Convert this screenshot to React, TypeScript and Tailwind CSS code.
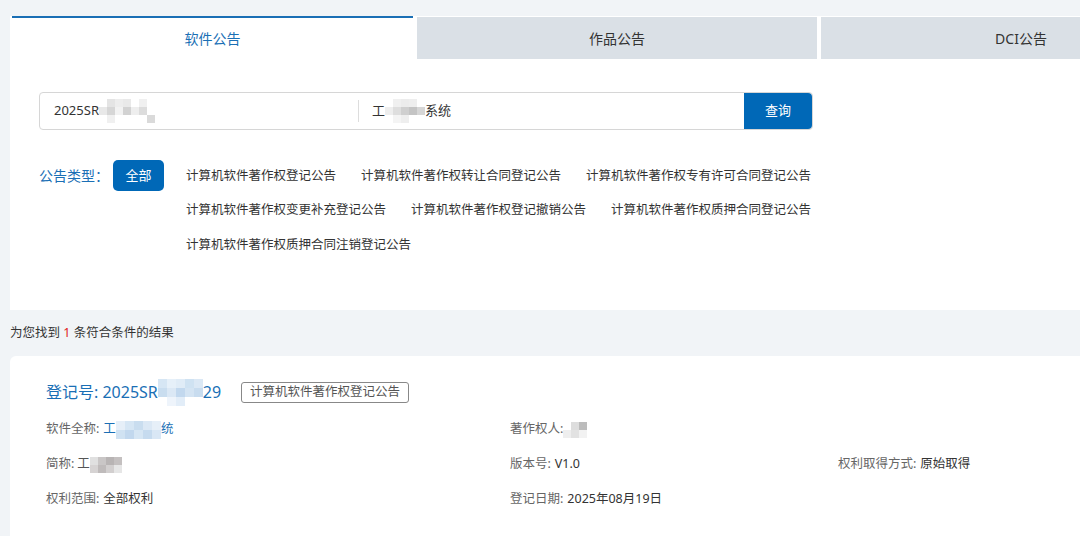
import React from 'react'

// pixelated blocks standing in for the masked text in the screenshot
function Mosaic({ rows, size = 8 }: { rows: string[][]; size?: number }) {
  return (
    <span className="inline-flex flex-col align-middle blur-[0.6px]">
      {rows.map((row, i) => (
        <span key={i} className="flex">
          {row.map((c, j) => (
            <span key={j} style={{ width: size, height: size, background: c }} />
          ))}
        </span>
      ))}
    </span>
  )
}

const types = [
  '计算机软件著作权登记公告',
  '计算机软件著作权转让合同登记公告',
  '计算机软件著作权专有许可合同登记公告',
  '计算机软件著作权变更补充登记公告',
  '计算机软件著作权登记撤销公告',
  '计算机软件著作权质押合同登记公告',
  '计算机软件著作权质押合同注销登记公告',
]

const w = '#ffffff'

export default function App() {
  return (
    <div className="min-h-[536px] w-full overflow-hidden bg-[#f1f4f7] pt-[16px] pl-[10px] font-['Noto_Sans','Noto_Sans_CJK_SC',sans-serif] text-[#333]">
      {/* search panel */}
      <div className="h-[294px] w-[1240px] bg-white">
        <div className="flex h-[43px] gap-[4px] pl-[2px]">
          <div className="flex w-[401px] items-center justify-center border-t-2 border-[#1a6fb5] text-[14px] text-[#1a6fb5]">
            软件公告
          </div>
          <div className="mt-[1px] flex w-[400px] items-center justify-center bg-[#dae0e6] text-[14px] text-[#333]">
            作品公告
          </div>
          <div className="mt-[1px] flex w-[400px] items-center justify-center bg-[#dae0e6] text-[14px] text-[#333]">
            DCI公告
          </div>
        </div>

        <div className="ml-[29px] mt-[33px] flex h-[38px] w-[774px] rounded-[4px] border border-[#d6d6d6]">
          <div className="flex w-[318px] items-center pl-[14px] text-[13px] text-[#333]">
            2025SR
            <Mosaic
              size={8}
              rows={[
                [w, '#e4e4e4', '#ededed', '#e9e9e9', w, '#f0f0f0', w, w],
                ['#e8e8e8', '#d6d6d6', '#f2f2f2', '#d2d2d2', '#eeeeee', '#dcdcdc', w, w],
                [w, '#f0f0f0', w, w, w, w, '#dadada', w],
              ]}
            />
          </div>
          <div className="my-auto h-[22px] w-px bg-[#ddd]" />
          <div className="flex flex-1 items-center pl-[13px] text-[13px] text-[#333]">
            工
            <Mosaic
              size={8}
              rows={[
                [w, '#f0f0f0', '#ececec', '#eeeeee', w],
                ['#eeeeee', '#dedede', '#cfcfcf', '#c4c4c4', '#d6d6d6'],
                [w, '#f4f4f4', '#eeeeee', w, w],
              ]}
            />
            系统
          </div>
          <button className="w-[68px] rounded-r-[4px] bg-[#0068b7] text-[13px] text-white">查询</button>
        </div>

        <div className="ml-[29px] mt-[30px] flex items-start">
          <div className="flex h-[31px] w-[74px] items-center text-[14px] text-[#1a6fb5]">公告类型：</div>
          <button className="h-[31px] w-[51px] rounded-[5px] bg-[#0068b7] text-[13px] text-white">全部</button>
          <div className="-mt-[1.5px] ml-[22px] flex w-[640px] flex-wrap gap-x-[25px]">
            {types.map((t) => (
              <span key={t} className="h-[34.5px] text-[12.5px] leading-[34.5px] text-[#333]">
                {t}
              </span>
            ))}
          </div>
        </div>
      </div>

      <div className="mt-[14px] text-[12.5px] leading-[18px] text-[#333]">
        为您找到 <span className="text-[#e02020]">1</span> 条符合条件的结果
      </div>

      {/* result card */}
      <div className="mt-[14px] h-[220px] w-[1240px] rounded-[6px] bg-white pl-[36px] pt-[24px]">
        <div className="flex h-[24px] items-center gap-[20px]">
          <div className="flex items-center text-[16px] text-[#1a6fb5]">
            登记号: 2025SR
            <Mosaic
              size={9}
              rows={[
                ['#d6e6f4', '#e6f0f9', '#e0ecf7', '#cfe2f2', '#dbe8f5'],
                ['#c9ddef', '#dbe8f5', '#c2d8ee', '#d4e4f3', '#c8dcef'],
                [w, '#eef4fb', '#e2edf8', w, w],
              ]}
            />
            29
          </div>
          <span className="flex h-[21px] items-center rounded-[3px] border border-[#888] px-[8px] text-[12.5px] text-[#555]">
            计算机软件著作权登记公告
          </span>
        </div>

        <div className="mt-[8px] grid grid-cols-[464px_328px_1fr] text-[12.5px]">
          <div className="flex h-[35px] items-center">
            <span className="text-[#666]">软件全称: </span>
            <span className="ml-[4px] flex items-center text-[#1a6fb5]">
              工
              <Mosaic
                size={9}
                rows={[
                  ['#e6eff8', '#d6e6f4', '#c9ddef', '#dbe8f5', '#e6eff8'],
                  ['#d0e2f2', '#c2d8ee', '#d6e6f4', '#c6dbef', '#d9e7f5'],
                ]}
              />
              统
            </span>
          </div>
          <div className="flex h-[35px] items-center">
            <span className="text-[#666]">著作权人:</span>
            <Mosaic
              size={8}
              rows={[
                [w, '#dddddd', '#bcbcbc', w],
                ['#eeeeee', '#e2e2e2', '#f2f2f2', w],
              ]}
            />
          </div>
          <div className="h-[35px]" />

          <div className="flex h-[35px] items-center">
            <span className="text-[#666]">简称: </span>
            <span className="ml-[3px] text-[#555]">工</span>
            <Mosaic
              size={8}
              rows={[
                ['#e0e0e0', '#c9c6c6', '#b8b4b4', '#c4c0c0'],
                ['#d6d3d3', '#bfbbbb', '#d2cfcf', '#e6e6e6'],
              ]}
            />
          </div>
          <div className="flex h-[35px] items-center">
            <span className="text-[#666]">版本号: </span>
            <span className="ml-[4px]">V1.0</span>
          </div>
          <div className="flex h-[35px] items-center">
            <span className="text-[#666]">权利取得方式: </span>
            <span className="ml-[4px]">原始取得</span>
          </div>

          <div className="flex h-[35px] items-center">
            <span className="text-[#666]">权利范围: </span>
            <span className="ml-[4px]">全部权利</span>
          </div>
          <div className="flex h-[35px] items-center">
            <span className="text-[#666]">登记日期: </span>
            <span className="ml-[4px]">2025年08月19日</span>
          </div>
          <div className="h-[35px]" />
        </div>
      </div>
    </div>
  )
}
